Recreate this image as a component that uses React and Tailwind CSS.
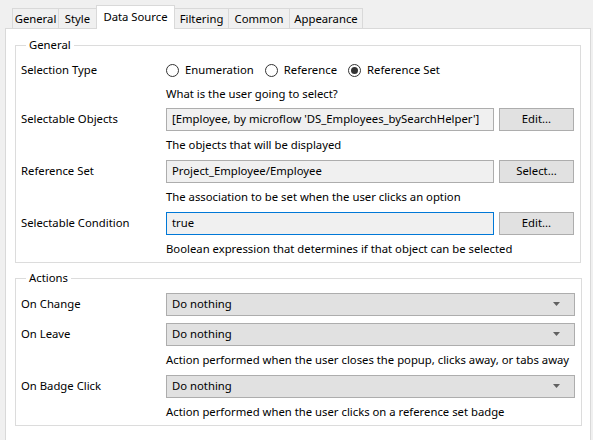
import React from "react";

const tabs = [
  { name: "General", w: "w-[47px]" },
  { name: "Style", w: "w-[39px]" },
  { name: "Data Source", w: "w-[79px]", active: true },
  { name: "Filtering", w: "w-[55px]" },
  { name: "Common", w: "w-[62px]" },
  { name: "Appearance", w: "w-[74px]" },
];

function Radio({ checked, label }) {
  return (
    <div className="flex items-center gap-[6px] mr-[11px]">
      <span className="w-[13px] h-[13px] rounded-full border border-[#333333] bg-white flex items-center justify-center">
        {checked && <span className="w-[7px] h-[7px] rounded-full bg-[#333333]" />}
      </span>
      <span>{label}</span>
    </div>
  );
}

function Row({ label, children, className = "h-[26px]" }) {
  return (
    <div className={"flex items-center " + className}>
      <div className="w-[145px] shrink-0">{label}</div>
      <div className="flex-1 flex items-center">{children}</div>
    </div>
  );
}

function Help({ text, className = "h-[26px]" }) {
  return (
    <div className={"flex items-center pl-[145px] whitespace-nowrap " + className}>
      <span>{text}</span>
    </div>
  );
}

function TextBox({ value, focused }) {
  return (
    <div
      className={
        "w-[328px] h-[23px] flex items-center px-[5px] bg-[#f0f0f0] border " +
        (focused ? "border-[#0078d7]" : "border-[#adadad]")
      }
    >
      <span className="whitespace-nowrap">{value}</span>
    </div>
  );
}

function Button({ label }) {
  return (
    <button className="ml-[5px] w-[75px] h-[23px] bg-[#e1e1e1] border border-[#adadad] flex items-center justify-center">
      {label}
    </button>
  );
}

function Dropdown({ value }) {
  return (
    <div className="w-[409px] h-[23px] flex items-center justify-between pl-[5px] pr-[14px] bg-[#e1e1e1] border border-[#adadad]">
      <span>{value}</span>
      <svg width="7" height="4" viewBox="0 0 7 4">
        <path d="M0 0h7L3.5 4z" fill="#606060" />
      </svg>
    </div>
  );
}

export default function App() {
  return (
    <div className="w-[593px] h-[440px] overflow-hidden bg-[#f0f0f0] text-[11.3px] leading-none text-black font-['Segoe_UI','Noto_Sans',sans-serif]">
      <div className="flex items-end h-[28px] pl-[12px]">
        {tabs.map((t) =>
          t.active ? (
            <div
              key={t.name}
              className={
                t.w +
                " h-[24px] -ml-px -mb-px relative z-10 bg-white border border-b-0 border-[#d9d9d9] flex items-center justify-center pb-[2px]"
              }
            >
              {t.name}
            </div>
          ) : (
            <div
              key={t.name}
              className={
                t.w +
                " h-[20px] -ml-px first:ml-0 bg-[#f0f0f0] border border-b-0 border-[#d9d9d9] flex items-center justify-center"
              }
            >
              {t.name}
            </div>
          )
        )}
      </div>

      <div className="ml-[5px] w-[586px] h-[420px] bg-white border border-[#d9d9d9] px-[9px] pt-[8px]">
        <fieldset className="border border-[#dcdcdc] pl-[5px] pr-[6px] pb-0 pt-[5px]">
          <legend className="ml-[5px] px-[3px] h-[16px] flex items-center">General</legend>
          <Row label="Selection Type" className="h-[24px]">
            <Radio label="Enumeration" />
            <Radio label="Reference" />
            <Radio label="Reference Set" checked />
          </Row>
          <Help text="What is the user going to select?" className="h-[24px]" />
          <Row label="Selectable Objects">
            <TextBox value="[Employee, by microflow 'DS_Employees_bySearchHelper']" />
            <Button label="Edit..." />
          </Row>
          <Help text="The objects that will be displayed" />
          <Row label="Reference Set">
            <TextBox value="Project_Employee/Employee" />
            <Button label="Select..." />
          </Row>
          <Help text="The association to be set when the user clicks an option" />
          <Row label="Selectable Condition">
            <TextBox value="true" focused />
            <Button label="Edit..." />
          </Row>
          <Help text="Boolean expression that determines if that object can be selected" />
        </fieldset>

        <fieldset className="mt-[7px] border border-[#dcdcdc] pl-[5px] pr-[6px] pb-0 pt-[5px]">
          <legend className="ml-[5px] px-[3px] h-[16px] flex items-center">Actions</legend>
          <Row label="On Change">
            <Dropdown value="Do nothing" />
          </Row>
          <Row label="On Leave" className="h-[26px] mt-[4px]">
            <Dropdown value="Do nothing" />
          </Row>
          <Help text="Action performed when the user closes the popup, clicks away, or tabs away" />
          <Row label="On Badge Click">
            <Dropdown value="Do nothing" />
          </Row>
          <Help text="Action performed when the user clicks on a reference set badge" />
        </fieldset>
      </div>
    </div>
  );
}
